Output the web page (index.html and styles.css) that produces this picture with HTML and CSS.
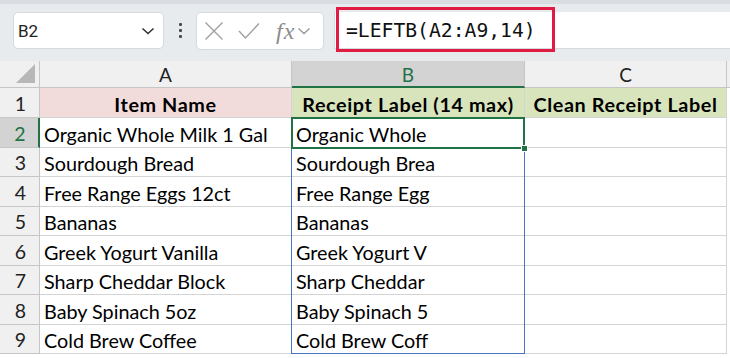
FILE: index.html
```html
<!DOCTYPE html>
<html>
<head>
<meta charset="utf-8">
<link rel="stylesheet" href="styles.css">
</head>
<body>
<div class="toolbar">
  <div class="namebox">
    <span class="nb-text">B2</span>
    <svg class="nb-chev" width="14" height="8" viewBox="0 0 14 8"><path d="M1.5 1.5 L7 6.5 L12.5 1.5" fill="none" stroke="#333" stroke-width="1.6"/></svg>
  </div>
  <div class="dots"><i></i><i></i><i></i></div>
  <div class="fnbox">
    <svg width="20" height="20" viewBox="0 0 20 20"><path d="M1.5 1.5 L18.5 18.5 M18.5 1.5 L1.5 18.5" stroke="#a0a0a0" stroke-width="1.4" fill="none"/></svg>
    <svg width="22" height="18" viewBox="0 0 22 18"><path d="M1 9 L7.5 16 L21 1.5" stroke="#a0a0a0" stroke-width="1.4" fill="none"/></svg>
    <span class="fx">fx</span>
    <svg width="14" height="8" viewBox="0 0 14 8"><path d="M1.5 1.5 L7 6.5 L12.5 1.5" fill="none" stroke="#999" stroke-width="1.4"/></svg>
  </div>
  <div class="formula">
    <span class="ftext">=LEFTB(A2:A9,14)</span>
    <div class="redbox"></div>
  </div>
</div>
<div class="sheet">
  <div class="cells">
    <div class="corner"><div class="tri"></div></div>
    <div class="ch">A</div>
    <div class="ch active">B</div>
    <div class="ch">C</div>
    <div class="ch end"></div>

    <div class="rh">1</div>
    <div class="c hdr pink">Item Name</div>
    <div class="c hdr green">Receipt Label (14 max)</div>
    <div class="c hdr green">Clean Receipt Label</div>
    <div class="c end"></div>

    <div class="rh active">2</div>
    <div class="c">Organic Whole Milk 1 Gal</div>
    <div class="c">Organic Whole</div>
    <div class="c"></div>
    <div class="c end"></div>

    <div class="rh">3</div>
    <div class="c">Sourdough Bread</div>
    <div class="c">Sourdough Brea</div>
    <div class="c"></div>
    <div class="c end"></div>

    <div class="rh">4</div>
    <div class="c">Free Range Eggs 12ct</div>
    <div class="c">Free Range Egg</div>
    <div class="c"></div>
    <div class="c end"></div>

    <div class="rh">5</div>
    <div class="c">Bananas</div>
    <div class="c">Bananas</div>
    <div class="c"></div>
    <div class="c end"></div>

    <div class="rh">6</div>
    <div class="c">Greek Yogurt Vanilla</div>
    <div class="c">Greek Yogurt V</div>
    <div class="c"></div>
    <div class="c end"></div>

    <div class="rh">7</div>
    <div class="c">Sharp Cheddar Block</div>
    <div class="c">Sharp Cheddar</div>
    <div class="c"></div>
    <div class="c end"></div>

    <div class="rh">8</div>
    <div class="c">Baby Spinach 5oz</div>
    <div class="c">Baby Spinach 5</div>
    <div class="c"></div>
    <div class="c end"></div>

    <div class="rh">9</div>
    <div class="c">Cold Brew Coffee</div>
    <div class="c">Cold Brew Coff</div>
    <div class="c"></div>
    <div class="c end"></div>
  </div>
  <div class="overlay">
    <div class="range"></div>
    <div class="sel"><div class="handle"></div></div>
  </div>
</div>
</body>
</html>
```
FILE: styles.css
```css
* { box-sizing: border-box; }
html, body { margin: 0; padding: 0; }
body {
  width: 730px;
  height: 358px;
  overflow: hidden;
  background: #ffffff;
  font-family: "Lato", "Liberation Sans", sans-serif;
}
.toolbar {
  height: 61px;
  background: #e8ebee;
  border-top: 4px solid #d9dce0;
  display: flex;
  align-items: flex-start;
  padding: 8px 0 0 13px;
}
.namebox {
  width: 151px;
  height: 37px;
  background: #fff;
  border: 1px solid #d6d9dd;
  border-radius: 5px;
  display: flex;
  align-items: center;
  justify-content: space-between;
  padding: 0 8px 0 4px;
}
.nb-text {
  font-family: "Roboto", "Liberation Sans", sans-serif;
  font-size: 17px;
  color: #222;
}
.dots {
  width: 32px;
  height: 37px;
  display: flex;
  flex-direction: column;
  align-items: center;
  justify-content: center;
  gap: 3px;
}
.dots i {
  display: block;
  width: 3px;
  height: 3px;
  background: #4a4a4a;
  border-radius: 1px;
}
.fnbox {
  width: 128px;
  height: 38px;
  background: #fff;
  border: 1px solid #d6d9dd;
  border-radius: 5px;
  display: flex;
  align-items: center;
  padding: 0 4px 0 7px;
  gap: 14px;
}
.fx {
  font-family: "Liberation Serif", serif;
  font-style: italic;
  font-size: 24px;
  color: #8c8c8c;
  margin-left: 2px;
  margin-right: -12px;
  letter-spacing: 1px;
}
.formula {
  position: relative;
  flex: 1;
  height: 37px;
  margin-left: 10px;
  background: #fff;
  border-left: 1px solid #d6d9dd;
  border-bottom: 1px solid #d6d9dd;
  display: flex;
  align-items: center;
  padding-left: 11px;
}
.ftext {
  font-family: "DejaVu Sans Mono", monospace;
  font-size: 19.7px;
  color: #111;
}
.redbox {
  position: absolute;
  left: 1px;
  top: -5px;
  width: 219px;
  height: 45px;
  border: 3px solid #e01c44;
}
.sheet {
  display: grid;
}
.cells, .overlay {
  grid-area: 1 / 1;
  display: grid;
  grid-template-columns: 40px 252px 233px 202px 1fr;
  grid-template-rows: 27px 30px repeat(8, 29.5px);
}
.overlay { pointer-events: none; }
.cells {
  font-size: 19.8px;
  color: #000;
}
.corner {
  background: #f0f0f0;
  border-right: 1px solid #c6c6c6;
  border-bottom: 1px solid #c6c6c6;
  position: relative;
}
.tri {
  position: absolute;
  right: 4px;
  bottom: 4px;
  width: 0;
  height: 0;
  border-left: 19px solid transparent;
  border-bottom: 19px solid #b7b7b7;
}
.ch {
  background: #f0f0f0;
  border-right: 1px solid #c6c6c6;
  border-bottom: 1px solid #c6c6c6;
  display: flex;
  align-items: center;
  justify-content: center;
  font-size: 19px;
  color: #222;
  padding-top: 1px;
}
.ch.active {
  background: #d3d3d3;
  color: #217346;
  border-bottom: 2px solid #217346;
}
.ch.end {
  border-right: none;
  background: #f0f0f0;
}
.rh {
  background: #f0f0f0;
  border-right: 1px solid #c6c6c6;
  border-bottom: 1px solid #c6c6c6;
  display: flex;
  align-items: center;
  justify-content: center;
  font-size: 19.5px;
  color: #222;
  padding: 2px 0 0 2px;
}
.rh.active {
  background: #d3d3d3;
  color: #217346;
  border-right: 2px solid #217346;
}
.c {
  border-right: 1px solid #d4d4d4;
  border-bottom: 1px solid #d4d4d4;
  display: flex;
  align-items: center;
  padding: 3px 0 0 4px;
  white-space: nowrap;
  overflow: hidden;
}
.c.end {
  border-right: none;
  border-bottom: none;
}
.c.hdr {
  justify-content: center;
  font-weight: 700;
  font-size: 19.8px;
  letter-spacing: 0.6px;
  padding-left: 0;
}
.c.pink { background: #f2dcdb; }
.c.green { background: #d8e4bc; }
.range {
  grid-column: 3;
  grid-row: 4 / 11;
  margin: -1px 0 0 -1px;
  border: 1.5px solid #4a74c4;
}
.sel {
  grid-column: 3;
  grid-row: 3;
  margin: -1px 0 -1px -1px;
  border: 2px solid #217346;
  position: relative;
}
.handle {
  position: absolute;
  right: -5px;
  bottom: -5px;
  width: 7px;
  height: 7px;
  background: #217346;
  border: 1px solid #fff;
}
```
